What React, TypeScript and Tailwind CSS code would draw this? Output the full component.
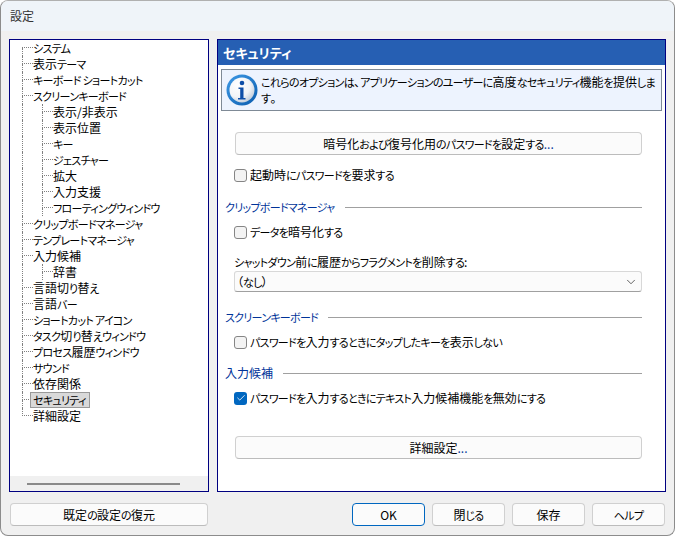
import React from 'react'
import { ChevronDown, Check } from 'lucide-react'

type Item = { label: string; child?: boolean; selected?: boolean }

const items: Item[] = [
  { label: 'システム' },
  { label: '表示テーマ' },
  { label: 'キーボード ショートカット' },
  { label: 'スクリーンキーボード' },
  { label: '表示/非表示', child: true },
  { label: '表示位置', child: true },
  { label: 'キー', child: true },
  { label: 'ジェスチャー', child: true },
  { label: '拡大', child: true },
  { label: '入力支援', child: true },
  { label: 'フローティングウィンドウ', child: true },
  { label: 'クリップボードマネージャ' },
  { label: 'テンプレートマネージャ' },
  { label: '入力候補' },
  { label: '辞書', child: true },
  { label: '言語切り替え' },
  { label: '言語バー' },
  { label: 'ショートカット アイコン' },
  { label: 'タスク切り替えウィンドウ' },
  { label: 'プロセス履歴ウィンドウ' },
  { label: 'サウンド' },
  { label: '依存関係' },
  { label: 'セキュリティ', selected: true },
  { label: '詳細設定' },
]

const dot = 'border-dotted border-[#808080]'

// kana in the original UI font is much narrower than the kanji, so shrink only those runs
function Jp({ text }: { text: string }) {
  return (
    <>
      {text.split(/([\u3040-\u30ff ]+)/).map((part, i) =>
        i % 2 === 1 ? (
          <span key={i} className="text-[11px] tracking-[-0.7px]">{part}</span>
        ) : (
          part
        ),
      )}
    </>
  )
}

function TreeRow({ item, first, last }: { item: Item; first: boolean; last: boolean }) {
  return (
    <div className="flex h-4 pl-[12px] leading-4">
      {item.child && <div className={`w-[20px] h-4 border-l ${dot}`} />}
      <div className="w-[11px] h-4 shrink-0">
        <div className={`h-2 border-b ${dot} ${first ? '' : 'border-l'}`} />
        <div className={`h-2 ${dot} ${last ? '' : 'border-l'}`} />
      </div>
      {item.selected ? (
        <span className="-ml-[3px] h-4 pl-[2px] pr-[3px] bg-[#d9d9d9] border border-[#999999] leading-[14px] whitespace-nowrap">
          <Jp text={item.label} />
        </span>
      ) : (
        <span className="whitespace-nowrap">
          <Jp text={item.label} />
        </span>
      )}
    </div>
  )
}

function Btn({ children, primary, className }: { children: React.ReactNode; primary?: boolean; className?: string }) {
  return (
    <button className={`h-[23px] rounded-[4px] border bg-[#fbfbfb] text-[12px] leading-none text-black ${primary ? 'border-[#0067c0]' : 'border-[#d0d0d0] border-b-[#bcbcbc]'} ${className ?? ''}`}>
      {children}
    </button>
  )
}

function CheckRow({ label, checked, className }: { label: string; checked?: boolean; className?: string }) {
  return (
    <div className={`flex items-center h-4 ml-[9px] ${className ?? ''}`}>
      {checked ? (
        <span className="w-[13px] h-[13px] rounded-[3px] bg-[#0067c0] flex items-center justify-center">
          <Check size={10} strokeWidth={2} color="#ffffff" />
        </span>
      ) : (
        <span className="w-[13px] h-[13px] rounded-[3px] bg-[#f3f3f3] border border-[#858585]" />
      )}
      <span className="ml-[3px] whitespace-nowrap">
        <Jp text={label} />
      </span>
    </div>
  )
}

function Section({ title, className }: { title: string; className?: string }) {
  return (
    <div className={`flex items-center h-4 ${className ?? ''}`}>
      <span className="text-[#003399] whitespace-nowrap">
        <Jp text={title} />
      </span>
      <div className="flex-1 ml-[10px] h-px bg-[#a0a0a0]" />
    </div>
  )
}

function InfoIcon() {
  return (
    <svg width="32" height="32" viewBox="0 0 32 32" className="shrink-0">
      <defs>
        <radialGradient id="face" cx="0.35" cy="0.3" r="0.8">
          <stop offset="0" stopColor="#ffffff" />
          <stop offset="0.6" stopColor="#f2f4f7" />
          <stop offset="1" stopColor="#b9c6d6" />
        </radialGradient>
        <linearGradient id="ring" x1="0" y1="0" x2="1" y2="1">
          <stop offset="0" stopColor="#3f9ae6" />
          <stop offset="1" stopColor="#0a5cae" />
        </linearGradient>
      </defs>
      <circle cx="16" cy="16" r="15.5" fill="url(#ring)" />
      <circle cx="16" cy="16" r="12.5" fill="url(#face)" />
      <circle cx="16" cy="9" r="2.3" fill="#0f4fa8" />
      <path d="M12.5 13.5h5v10.5h2v1.5h-7.5v-1.5h2.2v-9h-1.7z" fill="#0f4fa8" />
    </svg>
  )
}

export default function App() {
  return (
    <div
      lang="ja"
      className="w-[675px] h-[536px] bg-white text-[12px] text-black [font-family:'Noto_Sans_CJK_JP','Noto_Sans',sans-serif] [font-feature-settings:'palt']"
    >
      <div className="w-full h-full flex flex-col rounded-[8px] border border-[#8c8c8c] border-t-[#b0b0b0] bg-[#f0f0f0] overflow-hidden">
        <div className="h-[30px] shrink-0 bg-[#eff4f9] pl-[9px] flex items-center text-[#333333]">設定</div>

        <div className="flex-1 flex flex-col px-[8px] pt-[8px] pb-[9px] min-h-0">
          <div className="flex gap-[8px] h-[453px]">
            <div className="w-[200px] border border-[#000080] bg-white flex flex-col">
              <div className="flex-1">
                {items.map((item, i) => (
                  <TreeRow key={i} item={item} first={i === 0} last={i === items.length - 1} />
                ))}
              </div>
              <div className="h-[15px] bg-[#f0f0f0] flex items-center pl-[17px]">
                <div className="w-[153px] h-[2px] bg-[#8a8a8a]" />
              </div>
            </div>

            <div className="w-[449px] border border-[#000080] bg-white flex flex-col">
              <div className="h-[25px] bg-[#265fb3] text-white text-[13px] font-bold flex items-center pl-[5px] shrink-0">セキュリティ</div>
              <div className="mx-[3px] mt-[4px] h-[42px] border border-[#7f8a96] bg-[#edf3fe] flex items-center pl-[4px]">
                <InfoIcon />
                <div className="ml-[3px] leading-[15px] whitespace-nowrap">
                  <Jp text="これらのオプションは、アプリケーションのユーザーに高度なセキュリティ機能を提供しま" />
                  <br />
                  <Jp text="す。" />
                </div>
              </div>

              <div className="flex flex-col pl-[7px] pr-[23px]">
                <Btn className="mt-[21px] ml-[10px] w-[407px]">
                  <Jp text="暗号化および復号化用のパスワードを設定する" />
                  <span className="text-[#0a3f9e]">...</span>
                </Btn>
                <CheckRow label="起動時にパスワードを要求する" className="mt-[12px]" />

                <Section title="クリップボードマネージャ" className="mt-[16px]" />
                <CheckRow label="データを暗号化する" className="mt-[9px]" />
                <div className="mt-[14px] ml-[9px] h-4 leading-4 whitespace-nowrap">
                  <Jp text="シャットダウン前に履歴からフラグメントを削除する:" />
                </div>
                <div className="mt-[1px] ml-[9px] h-[21px] rounded-[3px] border border-[#d8d8d8] border-b-[#a0a0a0] bg-[#fbfbfb] flex items-center justify-between pl-[2px] pr-[3px]">
                  <span><Jp text="（なし）" /></span>
                  <ChevronDown size={14} strokeWidth={1.2} color="#222222" />
                </div>

                <Section title="スクリーンキーボード" className="mt-[17px]" />
                <CheckRow label="パスワードを入力するときにタップしたキーを表示しない" className="mt-[9px]" />

                <Section title="入力候補" className="mt-[15px]" />
                <CheckRow label="パスワードを入力するときにテキスト入力候補機能を無効にする" checked className="mt-[9px]" />

                <Btn className="mt-[30px] ml-[10px] w-[407px]">
                  詳細設定<span className="text-[#0a3f9e]">...</span>
                </Btn>
              </div>
            </div>
          </div>

          <div className="flex mt-[11px] pl-[1px] pr-[1px]">
            <Btn className="w-[198px]"><Jp text="既定の設定の復元" /></Btn>
            <div className="ml-auto flex gap-[7px]">
              <Btn primary className="w-[73px]">OK</Btn>
              <Btn className="w-[73px]"><Jp text="閉じる" /></Btn>
              <Btn className="w-[73px]">保存</Btn>
              <Btn className="w-[73px]"><Jp text="ヘルプ" /></Btn>
            </div>
          </div>
        </div>
      </div>
    </div>
  )
}
